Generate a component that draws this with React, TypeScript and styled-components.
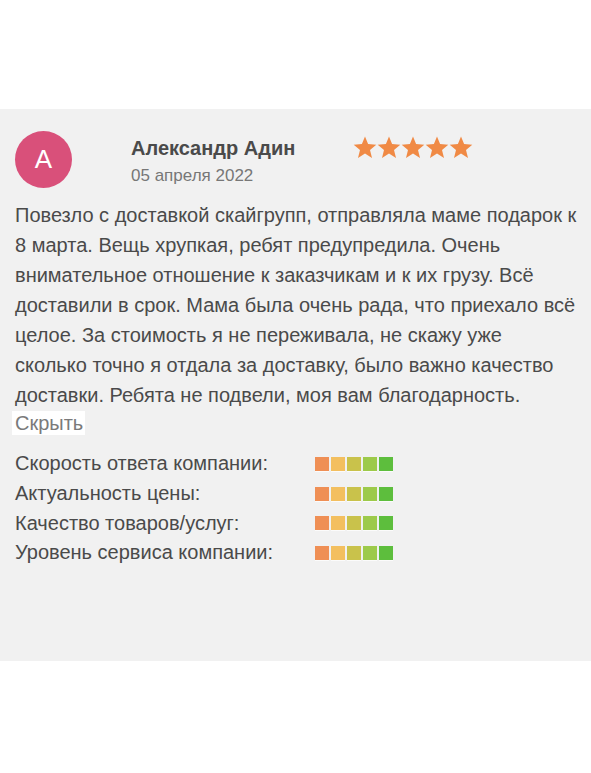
import React from "react";
import styled, { createGlobalStyle } from "styled-components";

const GlobalStyle = createGlobalStyle`
  html, body {
    margin: 0;
    padding: 0;
    background: #ffffff;
  }
  body {
    font-family: "Liberation Sans", Arial, sans-serif;
  }
`;

const Page = styled.div`
  padding: 109px 0 112px;
`;

const ReviewCard = styled.section`
  background: #f1f1f1;
  padding: 22px 12px 0 15px;
  height: 552px;
  box-sizing: border-box;
  color: #4a4a4a;
`;

const Header = styled.div`
  display: flex;
  align-items: flex-start;
`;

const Avatar = styled.div`
  width: 57px;
  height: 57px;
  border-radius: 50%;
  background: #d9507a;
  color: #ffffff;
  font-size: 26px;
  display: flex;
  align-items: center;
  justify-content: center;
  flex-shrink: 0;
`;

const Author = styled.div`
  margin-left: 59px;
  padding-top: 5px;
  width: 222px;
`;

const Name = styled.div`
  font-size: 20px;
  font-weight: 700;
  line-height: 24px;
`;

const Date = styled.div`
  font-size: 17px;
  color: #777777;
  margin-top: 6px;
  line-height: 20px;
`;

const Stars = styled.div`
  display: flex;
  padding-top: 4px;
`;

const Star = styled.svg`
  width: 24px;
  height: 24px;
  fill: #f08a45;
`;

const Body = styled.p`
  margin: 12px 0 0;
  font-size: 20px;
  line-height: 30px;
`;

const HideLink = styled.span`
  display: inline-block;
  background: #ffffff;
  color: #7a7a7a;
  font-size: 20px;
  line-height: 24px;
  padding: 0 2px 0 3px;
  margin-left: -3px;
  margin-top: 1px;
`;

const Ratings = styled.div`
  margin-top: 14px;
  display: flex;
  flex-direction: column;
`;

const RatingRow = styled.div`
  display: flex;
  align-items: center;
  height: 29.7px;
`;

const RatingLabel = styled.div`
  width: 300px;
  font-size: 20px;
`;

const Bar = styled.div`
  display: flex;
  gap: 2px;
`;

const Cell = styled.div<{ $color: string }>`
  width: 14px;
  height: 14px;
  background: ${(p) => p.$color};
  box-shadow: 0 1px 0 rgba(255, 255, 255, 0.7);
`;

const cellColors = ["#ef8f55", "#f3bf5f", "#c9c24b", "#9dca4a", "#5dbe3d"];

const ratings = [
  "Скорость ответа компании:",
  "Актуальность цены:",
  "Качество товаров/услуг:",
  "Уровень сервиса компании:",
];

const StarIcon = () => (
  <Star viewBox="0 0 24 24">
    <path d="M12 1.5l3.1 7.6 8.2.6-6.3 5.3 2 8-7-4.4-7 4.4 2-8L.7 9.7l8.2-.6z" />
  </Star>
);

const App: React.FC = () => {
  return (
    <>
      <GlobalStyle />
      <Page>
        <ReviewCard>
          <Header>
            <Avatar>A</Avatar>
            <Author>
              <Name>Александр Адин</Name>
              <Date>05 апреля 2022</Date>
            </Author>
            <Stars>
              {[0, 1, 2, 3, 4].map((i) => (
                <StarIcon key={i} />
              ))}
            </Stars>
          </Header>
          <Body>
            Повезло с доставкой скайгрупп, отправляла маме подарок к 8 марта.
            Вещь хрупкая, ребят предупредила. Очень внимательное отношение к
            заказчикам и к их грузу. Всё доставили в срок. Мама была очень
            рада, что приехало всё целое. За стоимость я не переживала, не
            скажу уже сколько точно я отдала за доставку, было важно качество
            доставки. Ребята не подвели, моя вам благодарность.
          </Body>
          <HideLink>Скрыть</HideLink>
          <Ratings>
            {ratings.map((label) => (
              <RatingRow key={label}>
                <RatingLabel>{label}</RatingLabel>
                <Bar>
                  {cellColors.map((c) => (
                    <Cell key={c} $color={c} />
                  ))}
                </Bar>
              </RatingRow>
            ))}
          </Ratings>
        </ReviewCard>
      </Page>
    </>
  );
};

export default App;
